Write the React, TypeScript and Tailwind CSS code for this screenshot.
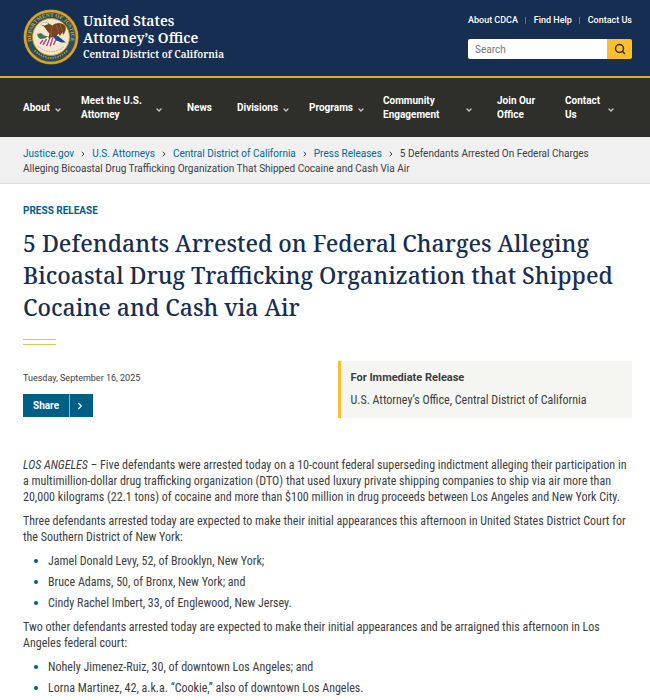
import { ChevronDown, ChevronRight, Search } from 'lucide-react';
import { clsx } from 'clsx';
import { Fragment } from 'react';

const topLinks = ['About CDCA', 'Find Help', 'Contact Us'];

const navItems = [
  { label: 'About', width: 'w-[58px]', menu: true },
  { label: 'Meet the U.S. Attorney', width: 'w-[106px]', menu: true, wide: true },
  { label: 'News', width: 'w-[50px]' },
  { label: 'Divisions', width: 'w-[72px]', menu: true },
  { label: 'Programs', width: 'w-[74px]', menu: true },
  { label: 'Community Engagement', width: 'w-[114px]', menu: true, wide: true },
  { label: 'Join Our Office', width: 'w-[68px]' },
  { label: 'Contact Us', width: 'w-[58px]', menu: true },
];

const crumbs = ['Justice.gov', 'U.S. Attorneys', 'Central District of California', 'Press Releases'];

const newYorkDefendants = [
  'Jamel Donald Levy, 52, of Brooklyn, New York;',
  'Bruce Adams, 50, of Bronx, New York; and',
  'Cindy Rachel Imbert, 33, of Englewood, New Jersey.',
];

const losAngelesDefendants = [
  'Nohely Jimenez-Ruiz, 30, of downtown Los Angeles; and',
  'Lorna Martinez, 42, a.k.a. “Cookie,” also of downtown Los Angeles.',
];

function Seal({ className }: { className?: string }) {
  return (
    <svg className={className} viewBox="0 0 112 112" aria-hidden="true">
      <defs>
        <path id="seal-top" d="M19.5 72 A40 40 0 1 1 92.500 72" />
      </defs>
      <circle cx="56" cy="56" r="55" fill="#b5821f" />
      <circle cx="56" cy="56" r="52" fill="none" stroke="#dca52f" strokeWidth="4" />
      <circle cx="56" cy="56" r="49" fill="#27505a" />
      <circle cx="56" cy="56" r="37" fill="#f5e7cb" stroke="#c9982f" strokeWidth="2" />
      <text fill="#c9a653" fontSize="11" fontWeight="700" fontFamily="Liberation Serif, serif">
        <textPath href="#seal-top" startOffset="50%" textAnchor="middle">
          DEPARTMENT OF JUSTICE
        </textPath>
      </text>
      <path d="M23 83 Q56 113 89 83" fill="none" stroke="#a5883f" strokeWidth="4" strokeDasharray="3 2" />
      <path d="M29 74 Q56 97 83 74" fill="none" stroke="#b3a68c" strokeWidth="2" strokeDasharray="3 2" />
      {/* eagle */}
      <path
        d="M35 31 C40 25 48 25 53 30 L59 33 C67 26 78 27 84 33 C87 38 86 45 80 52 L79 46 L74 54 L71 49 L66 56 L62 61 L55 57 L50 60 L53 49 C48 44 45 39 42 35 Z"
        fill="#74431f"
      />
      <path d="M59 34 C56 40 55 48 58 55 M66 32 L72 47 M74 31 L79 43" fill="none" stroke="#99622f" strokeWidth="2" />
      <path d="M35 31 C40 25 48 25 51 30 L43 33 Z" fill="#fff3d9" />
      {/* olive branch */}
      <path d="M28 50 L36 48 L42 53 L50 55 L43 59 L34 60 L30 56 Z" fill="#3c7a5c" />
      {/* shield */}
      <path d="M38 62 L62 56 L73 66 L56 76 L31 71 Z" fill="#fff" />
      <path
        d="M40 62 L34 70 M47 60 L40 72 M54 58 L47 74 M60 57 L54 75 M66 61 L61 72"
        stroke="#c23e72"
        strokeWidth="3"
      />
      <path d="M60 55 L70 54 L86 67 L77 67 L66 63 Z" fill="#1f4a8a" />
    </svg>
  );
}

function DefendantList({ items }: { items: string[] }) {
  return (
    <ul className="flex flex-col gap-[5px]">
      {items.map((item) => (
        <li key={item} className="flex items-center gap-[10px] pl-[11px]">
          <span className="size-1 rounded-full bg-[#005e87]" />
          {item}
        </li>
      ))}
    </ul>
  );
}

export default function App() {
  return (
    <div className="min-h-screen bg-white font-['Roboto',sans-serif] text-[#3d3d3f]">
      <header className="flex items-start justify-between border-b-2 border-[#e0aa35] bg-[#162e51] pr-[18px] pb-[11px] pl-[23px] text-white">
        <a href="#home" className="flex items-center gap-1 pt-[9px]">
          <Seal className="size-[56px]" />
          <span className="flex flex-col font-['Noto_Serif','Liberation_Serif',serif] font-semibold">
            <span className="text-[14px] leading-[17px]">United States</span>
            <span className="text-[14px] leading-[17px]">Attorney’s Office</span>
            <span className="text-[10px] leading-[17px]">Central District of California</span>
          </span>
        </a>
        <div className="flex w-[164px] flex-col gap-3 pt-[14px]">
          <ul className="flex justify-between text-[9px] leading-[13px] font-medium">
            {topLinks.map((link, i) => (
              <Fragment key={link}>
                {i > 0 && <li aria-hidden="true" className="my-[3px] w-px bg-[#5c6f8c]" />}
                <li>
                  <a href="#top">{link}</a>
                </li>
              </Fragment>
            ))}
          </ul>
          <form className="flex h-5 overflow-hidden rounded-xs" role="search">
            <input
              type="search"
              aria-label="Search"
              placeholder="Search"
              className="min-w-0 flex-1 bg-white px-[7px] text-[10px] text-[#1b1b1b] placeholder:text-[#757575]"
            />
            <button type="submit" aria-label="Submit search" className="flex w-[25px] items-center justify-center bg-[#ffbe2e]">
              <Search className="size-3 text-[#2e2e2a]" strokeWidth={3} />
            </button>
          </form>
        </div>
      </header>

      <nav className="flex h-[59px] items-center bg-[#2e2e2a] px-[23px] text-[10px] leading-[14px] font-bold text-white">
        {navItems.map(({ label, width, menu, wide }) =>
          menu ? (
            <button
              key={label}
              type="button"
              className={clsx('flex shrink-0 items-center text-left', width, wide ? 'justify-between pr-6' : 'gap-1')}
            >
              <span className={clsx(wide && 'w-[66px]', label === 'Contact Us' && 'w-[38px]')}>{label}</span>
              <ChevronDown className="mt-1 size-2 shrink-0 text-[#c9c9c9]" strokeWidth={4} />
            </button>
          ) : (
            <a key={label} href="#nav" className={clsx('shrink-0 pr-5', width)}>
              {label}
            </a>
          ),
        )}
      </nav>

      <div className="border-b border-[#dcdee0] bg-[#f0f0f0] px-[23px] pt-[9px] pb-[7px] text-[10px] leading-[15px]">
        {crumbs.map((crumb) => (
          <Fragment key={crumb}>
            <a href="#crumb" className="text-[#00679b]">
              {crumb}
            </a>
            <ChevronRight className="mx-[5px] inline size-2" strokeWidth={3} />
          </Fragment>
        ))}
        5 Defendants Arrested On Federal Charges
        <br />
        Alleging Bicoastal Drug Trafficking Organization That Shipped Cocaine and Cash Via Air
      </div>

      <main className="pr-[18px] pl-[23px]">
        <p className="pt-5 text-[10px] leading-[14px] font-bold text-[#005e87]">PRESS RELEASE</p>
        <h1 className="mt-[9px] font-['Noto_Serif','Liberation_Serif',serif] text-[23px] leading-8 font-medium text-[#162e51]">
          5 Defendants Arrested on Federal Charges Alleging
          <br />
          Bicoastal Drug Trafficking Organization that Shipped
          <br />
          Cocaine and Cash via Air
        </h1>
        <div className="mt-4 h-[6px] w-[33px] border-y border-[#e5c84f]" />

        <div className="mt-4 grid grid-cols-2 gap-[20px]">
          <div className="pt-[10px]">
            <p className="text-[9px] leading-[14px]">Tuesday, September 16, 2025</p>
            <button
              type="button"
              className="mt-[9px] flex h-[23px] items-stretch bg-[#005e87] text-[10px] font-bold text-white"
            >
              <span className="flex w-[46px] items-center pl-[10px]">Share</span>
              <span className="flex w-6 items-center border-l border-[#8fb8cc] pl-[5px]">
                <ChevronRight className="size-[10px]" strokeWidth={3} />
              </span>
            </button>
          </div>
          <section className="border-l-[3px] border-[#ffbe2e] bg-[#f5f6f1] px-[10px] pt-[9px] pb-[10px] font-['Roboto_Condensed','Roboto',sans-serif]">
            <h2 className="font-['Roboto',sans-serif] text-[11px] leading-4 font-bold">For Immediate Release</h2>
            <p className="mt-[6px] text-[12px] leading-4">U.S. Attorney’s Office, Central District of California</p>
          </section>
        </div>

        <article className="mt-[39px] flex flex-col gap-2 font-['Roboto_Condensed','Roboto',sans-serif] text-[12px] leading-4">
          <p>
            <em>LOS ANGELES –</em> Five defendants were arrested today on a 10-count federal superseding indictment alleging their participation in
            a multimillion-dollar drug trafficking organization (DTO) that used luxury private shipping companies to ship via air more than
            20,000 kilograms (22.1 tons) of cocaine and more than $100 million in drug proceeds between Los Angeles and New York City.
          </p>
          <p>
            Three defendants arrested today are expected to make their initial appearances this afternoon in United States District Court for
            the Southern District of New York:
          </p>
          <DefendantList items={newYorkDefendants} />
          <p>
            Two other defendants arrested today are expected to make their initial appearances and be arraigned this afternoon in Los
            <br />
            Angeles federal court:
          </p>
          <DefendantList items={losAngelesDefendants} />
        </article>
      </main>
    </div>
  );
}
